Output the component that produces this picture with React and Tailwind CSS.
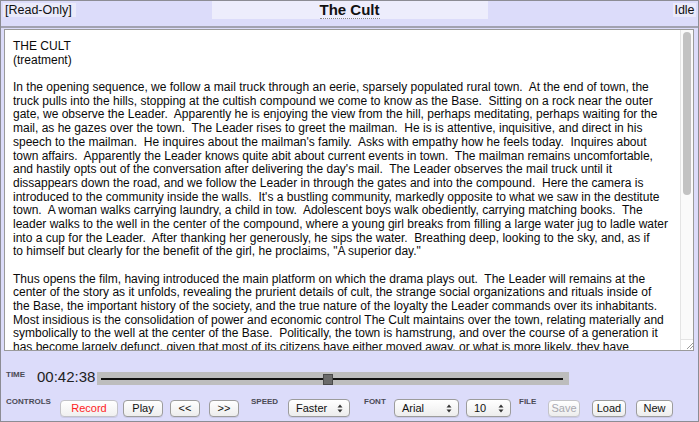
import React from "react";

const lines = [
  "THE CULT",
  "(treatment)",
  "",
  "In the opening sequence, we follow a mail truck through an eerie, sparsely populated rural town.  At the end of town, the",
  "truck pulls into the hills, stopping at the cultish compound we come to know as the Base.  Sitting on a rock near the outer",
  "gate, we observe the Leader.  Apparently he is enjoying the view from the hill, perhaps meditating, perhaps waiting for the",
  "mail, as he gazes over the town.  The Leader rises to greet the mailman.  He is is attentive, inquisitive, and direct in his",
  "speech to the mailman.  He inquires about the mailman's family.  Asks with empathy how he feels today.  Inquires about",
  "town affairs.  Apparently the Leader knows quite abit about current events in town.  The mailman remains uncomfortable,",
  "and hastily opts out of the conversation after delivering the day's mail.  The Leader observes the mail truck until it",
  "dissappears down the road, and we follow the Leader in through the gates and into the compound.  Here the camera is",
  "introduced to the community inside the walls.  It's a bustling community, markedly opposite to what we saw in the destitute",
  "town.  A woman walks carrying laundry, a child in tow.  Adolescent boys walk obediently, carrying matching books.  The",
  "leader walks to the well in the center of the compound, where a young girl breaks from filling a large water jug to ladle water",
  "into a cup for the Leader.  After thanking her generously, he sips the water.  Breathing deep, looking to the sky, and, as if",
  "to himself but clearly for the benefit of the girl, he proclaims, \"A superior day.\"",
  "",
  "Thus opens the film, having introduced the main platform on which the drama plays out.  The Leader will remains at the",
  "center of the story as it unfolds, revealing the prurient details of cult, the strange social organizations and rituals inside of",
  "the Base, the important history of the society, and the true nature of the loyalty the Leader commands over its inhabitants.",
  "Most insidious is the consolidation of power and economic control The Cult maintains over the town, relating materially and",
  "symbolically to the well at the center of the Base.  Politically, the town is hamstrung, and over the course of a generation it",
  "has become largely defunct, given that most of its citizens have either moved away, or what is more likely, they have",
];

const Label = ({ children, className = "" }) => (
  <div className={`text-[8px] leading-[10px] font-bold text-[#4a4a55] ${className}`}>
    {children}
  </div>
);

const Btn = ({ children, className = "", textClass = "text-[#111]" }) => (
  <div
    className={`h-[17px] mt-[3px] rounded-[4px] border border-[#9c9c9c] bg-gradient-to-b from-white to-[#ededed] shadow-[0_1px_0_rgba(0,0,0,0.08)] flex items-center justify-center text-[11px] leading-[15px] ${textClass} ${className}`}
  >
    {children}
  </div>
);

const Arrows = () => (
  <svg width="6" height="9" viewBox="0 0 6 9" className="shrink-0">
    <path d="M3 0.5 L5.5 3.5 L0.5 3.5 Z" fill="#333" />
    <path d="M3 8.5 L5.5 5.5 L0.5 5.5 Z" fill="#333" />
  </svg>
);

const Select = ({ value, className = "" }) => (
  <div
    className={`h-[18px] mt-[2px] rounded-[4px] border border-[#9c9c9c] bg-gradient-to-b from-white to-[#ededed] shadow-[0_1px_0_rgba(0,0,0,0.08)] flex items-center justify-between pl-[7px] pr-[6px] text-[11px] leading-[15px] text-[#111] ${className}`}
  >
    <span>{value}</span>
    <Arrows />
  </div>
);

export default function App() {
  return (
    <div className="w-[699px] h-[422px] bg-[#dcdcfa] border border-[#8c8c94] flex flex-col overflow-hidden font-['Liberation_Sans',Arial,sans-serif]">
      {/* header */}
      <div className="h-[27px] shrink-0 border-b-2 border-[#a2a2b0] grid grid-cols-[1fr_276px_1fr] items-start">
        <div className="flex">
          <div className="ml-[2px] mt-[2px] h-[14px] w-[73px] bg-[#eaeafa] text-[12.5px] leading-[14px] text-[#111] pl-[2px]">
            [Read-Only]
          </div>
        </div>
        <div className="h-[18px] bg-[#ededfc] flex justify-center">
          <span className="text-[15px] leading-[17px] font-bold text-[#111] border-b border-dotted border-[#888]">
            The Cult
          </span>
        </div>
        <div className="flex justify-end">
          <div className="mr-[2px] mt-[2px] h-[14px] w-[23px] bg-[#eaeafa] text-[12.5px] leading-[14px] text-[#111] text-center">
            Idle
          </div>
        </div>
      </div>

      {/* text area */}
      <div className="ml-[3px] mr-[4px] mt-[1px] h-[322px] shrink-0 border border-[#9a9a9a] bg-white flex overflow-hidden">
        <div className="flex-1 overflow-hidden pl-[8px] pt-[10px] text-[12px] leading-[13.7px] text-[#0a0a0a]">
          {lines.map((l, i) => (
            <div key={i} className="whitespace-pre h-[13.7px]">
              {l}
            </div>
          ))}
        </div>
        <div className="w-[13px] shrink-0 border-l border-[#e4e4e4] bg-[#fafafa] flex flex-col items-center">
          <div className="mt-[2px] w-[8px] h-[163px] rounded-full bg-[#c2c2c2]" />
          <div className="flex-1" />
          <div className="w-[13px] h-[11px] border-t border-[#e4e4e4] bg-white flex items-end justify-end">
            <svg width="10" height="10" viewBox="0 0 10 10">
              <path d="M9 3 L3 9 M9 6 L6 9" stroke="#9a9a9a" strokeWidth="1" />
            </svg>
          </div>
        </div>
      </div>

      {/* time row */}
      <div className="mt-[19px] h-[16px] flex items-start pl-[5px]">
        <Label className="w-[31px]">TIME</Label>
        <div className="w-[60px] -mt-[1px] text-[15px] leading-[15px] text-[#222]">00:42:38</div>
        <div className="mt-[2px] w-[472px] h-[13px] bg-[#bdbdbd] flex items-center pl-[4px]">
          <div className="w-[222px] h-[2px] bg-[#111]" />
          <div className="w-[10px] h-[11px] bg-[#6a6a6a] border border-[#4a4a4a] mt-[2px]" />
          <div className="w-[230px] h-[2px] bg-[#111]" />
        </div>
      </div>

      {/* controls row */}
      <div className="mt-[11px] flex items-start pl-[5px]">
        <Label className="w-[54px]">CONTROLS</Label>
        <Btn className="w-[58px] border-[#c2c2c8] from-[#fafafa] to-[#f0f0f0]" textClass="text-[#ff1c24]">
          Record
        </Btn>
        <Btn className="w-[40px] ml-[5px]">Play</Btn>
        <Btn className="w-[30px] ml-[7px]">&lt;&lt;</Btn>
        <Btn className="w-[30px] ml-[9px]">&gt;&gt;</Btn>
        <Label className="ml-[12px] w-[37px]">SPEED</Label>
        <Select value="Faster" className="w-[62px]" />
        <Label className="ml-[14px] w-[30px]">FONT</Label>
        <Select value="Arial" className="w-[65px]" />
        <Select value="10" className="w-[45px] ml-[7px]" />
        <Label className="ml-[8px] w-[29px]">FILE</Label>
        <Btn className="w-[32px] border-[#c4c4c8]" textClass="text-[#a8a8b0]">
          Save
        </Btn>
        <Btn className="w-[34px] ml-[12px]">Load</Btn>
        <Btn className="w-[37px] ml-[10px]">New</Btn>
      </div>
    </div>
  );
}
